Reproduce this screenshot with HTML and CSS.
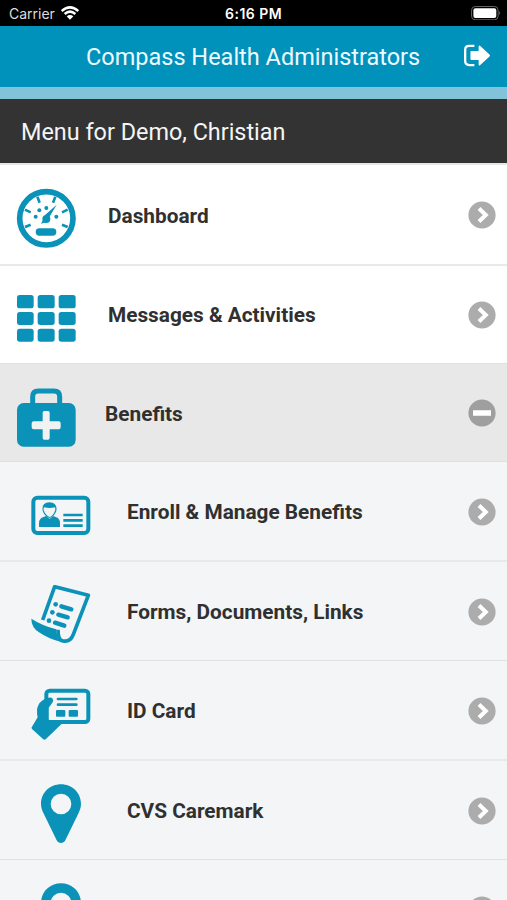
FILE: index.html
```html
<!DOCTYPE html>
<html lang="en">
<head>
<meta charset="utf-8">
<title>Compass Health Administrators</title>
<link rel="stylesheet" href="styles.css">
</head>
<body>
<svg width="0" height="0" class="defs" aria-hidden="true">
  <symbol id="go" viewBox="0 0 28 28"><circle cx="14" cy="14" r="13.6" fill="#acacac"/><path d="M11 7.5l6.8 6.5-6.8 6.5" fill="none" stroke="#fff" stroke-width="4"/></symbol>
  <symbol id="pin" viewBox="63 40 180 180"><path fill-rule="evenodd" d="M153 41c-33 0-60 25-60 59 0 11 4 20 9 31l38 78c6 11 20 11 26 0l38-78c5-11 9-20 9-31 0-34-27-59-60-59zm0 28a31 31 0 1 1 0 62 31 31 0 0 1 0-62z"/></symbol>
</svg>
<div class="status">
  <div class="carrier"><span>Carrier</span>
    <svg class="wifi" viewBox="0 0 54 42"><path d="M2 15Q27-7 52 15M11 24Q27 10 43 24" fill="none" stroke="#fff" stroke-width="7.5"/><path d="M17 31q10-8 20 0L27 41z" fill="#fff"/></svg>
  </div>
  <div class="time">6:16 PM</div>
  <svg class="battery" viewBox="0 0 90 44"><rect x="1.5" y="1.5" width="80" height="40" rx="11" fill="none" stroke="#66666a" stroke-width="3"/><rect x="7" y="7" width="69" height="29" rx="6" fill="#fff"/><path d="M85 15q6 6 0 13z" fill="#66666a"/></svg>
</div>
<header class="header">
  <h1>Compass Health Administrators</h1>
  <svg class="logout" viewBox="630 132 82 70"><path d="M663 138h-16q-12 0-12 12v34q0 12 12 12h16" fill="none" stroke="#fff" stroke-width="7"/><path d="M654 153h22v-13q0-6 5-2l28 26q3 3 0 6l-28 26q-5 4-5-2v-13h-22q-3 0-3-3v-22q0-3 3-3z" fill="#fff"/></svg>
</header>
<div class="strip"></div>
<div class="user">Menu for Demo, Christian</div>
<nav>
  <a class="row thick">
    <svg class="icon" viewBox="48 54 180 180"><circle cx="139" cy="145" r="80" fill="none" stroke="#0b92b8" stroke-width="17"/><path d="M112 80l7 18M166 80l-7 18M75 119l17 8M203 119l-17 8M75 171l17-7M203 171l-17-7" stroke="#0b92b8" stroke-width="8"/><circle cx="107" cy="140" r="6"/><circle cx="118" cy="121" r="6"/><circle cx="139" cy="114" r="6"/><circle cx="169" cy="140" r="6"/><path d="M170 104l-34 30-3 12 10 5 7-13z"/><circle cx="139" cy="147" r="12"/><path d="M123 161l7-13 10 8z"/><rect x="107" y="175" width="62" height="22" rx="11"/></svg>
    <span class="label">Dashboard</span><svg class="mark"><use href="#go"/></svg>
  </a>
  <a class="row second">
    <svg class="icon" viewBox="48 57 180 180"><rect x="51" y="75" width="50" height="40" rx="8"/><rect x="113" y="75" width="51" height="40" rx="8"/><rect x="176" y="75" width="51" height="40" rx="8"/><rect x="51" y="126" width="50" height="39" rx="8"/><rect x="113" y="126" width="51" height="39" rx="8"/><rect x="176" y="126" width="51" height="39" rx="8"/><rect x="51" y="176" width="50" height="39" rx="8"/><rect x="113" y="176" width="51" height="39" rx="8"/><rect x="176" y="176" width="51" height="39" rx="8"/></svg>
    <span class="label">Messages &amp; Activities</span><svg class="mark"><use href="#go"/></svg>
  </a>
  <a class="row open">
    <svg class="icon" viewBox="48 51 180 180"><path d="M98 104V80q0-17 17-17h47q17 0 17 17v24" fill="none" stroke="#0b92b8" stroke-width="15"/><rect x="51" y="99" width="176" height="131" rx="20"/><path d="M133 123h11q5 0 5 5v26h27q6 0 6 6v12q0 6-6 6h-27v26q0 5-5 5h-11q-5 0-5-5v-26h-27q-6 0-6-6v-12q0-6 6-6h27v-26q0-5 5-5z" fill="#f1f3f3"/></svg>
    <span class="label">Benefits</span>
    <svg class="mark" viewBox="0 0 28 28"><circle cx="14" cy="14" r="13.6" fill="#9f9f9f"/><path d="M5 14h18" stroke="#fff" stroke-width="5.5"/></svg>
  </a>
  <a class="row sub thick">
    <svg class="icon" viewBox="63 45 180 180"><rect x="70" y="83" width="165" height="106" rx="12" fill="none" stroke="#0b92b8" stroke-width="12"/><path d="M87 171v-12q0-14 14-18l7-3 11 8 11-8 7 3q13 4 13 18v12z"/><path d="M98 122q-4-24 20-25 25 1 21 25-5 17-20 22-16-5-21-22z"/><path d="M101 121q-1-4 1-9 17 4 33 0 2 5 0 10-5 15-16 19-12-4-18-20z" fill="#f2f4f5"/><path d="M160 135h58M160 151h58M160 167h58" stroke="#0b92b8" stroke-width="8"/></svg>
    <span class="label">Enroll &amp; Manage Benefits</span><svg class="mark"><use href="#go"/></svg>
  </a>
  <a class="row sub">
    <svg class="icon" viewBox="63 45 180 180"><path d="M98 150L134 50l101 26-45 117q-9 24-31 20-15-3-15-34" fill="none" stroke="#0b92b8" stroke-width="11" stroke-linejoin="round"/><path d="M64 146q33 21 75 32 1 25 12 37-33-7-64-28-23-15-23-41z"/><circle cx="137" cy="103" r="7"/><circle cx="127" cy="127" r="7"/><circle cx="117" cy="152" r="7"/><path d="M154 109l30 9M145 134l28 8M135 158l28 9" stroke="#0b92b8" stroke-width="13" stroke-linecap="round"/></svg>
    <span class="label">Forms, Documents, Links</span><svg class="mark"><use href="#go"/></svg>
  </a>
  <a class="row sub thick">
    <svg class="icon" viewBox="63 42 180 180"><rect x="109" y="62" width="126" height="94" rx="10" fill="none" stroke="#0b92b8" stroke-width="12"/><path d="M113 84q10-4 15 2 4 6-2 14l-10 13v38l6 6h38l-53 51q-4 3-8-1l-33-30q-3-4 0-7l17-28q-5-23 2-36 3-8 13-15 8-6 15-7z"/><path d="M144 87h55M144 104h55" stroke="#0b92b8" stroke-width="8" stroke-linecap="round"/><rect x="138" y="120" width="28" height="20" rx="3"/><rect x="176" y="120" width="28" height="20" rx="3"/></svg>
    <span class="label">ID Card</span><svg class="mark"><use href="#go"/></svg>
  </a>
  <a class="row sub">
    <svg class="icon"><use href="#pin"/></svg>
    <span class="label">CVS Caremark</span><svg class="mark"><use href="#go"/></svg>
  </a>
  <a class="row sub cut">
    <svg class="icon"><use href="#pin"/></svg>
    <span class="label"></span><svg class="mark"><use href="#go"/></svg>
  </a>
</nav>
</body>
</html>
```
FILE: styles.css
```css
* { box-sizing: border-box; }
body {
  margin: 0;
  height: 900px;
  overflow: hidden;
  background: #f3f5f6;
  font-family: Roboto, "Liberation Sans", sans-serif;
  color: #303030;
}
.defs { position: absolute; }
.status {
  height: 26px;
  padding: 2px 6px 0 9px;
  background: #000;
  color: #fff;
  display: grid;
  grid-template-columns: 216px auto 1fr;
  align-items: center;
  font: 14px/24px Inter, sans-serif;
}
.carrier { display: flex; align-items: center; gap: 6px; color: #ddd; }
.wifi { width: 18px; height: 14px; margin-top: -2px; }
.time { font-weight: 600; letter-spacing: 0.5px; }
.battery { width: 30px; height: 14.6px; justify-self: end; margin-top: -2px; }
.header {
  height: 61px;
  background: #0092bb;
  display: flex;
  align-items: center;
  justify-content: center;
  padding: 0 16px 0 86px;
}
h1 {
  margin: 0;
  flex: 1;
  font-size: 23.5px;
  font-weight: 400;
  line-height: 62px;
  color: #effaff;
  white-space: nowrap;
}
.logout { width: 28px; height: 23px; margin-top: -2px; }
.strip { height: 12px; background: #83c3da; }
.user {
  height: 66px;
  padding-left: 21px;
  background: #333;
  border-bottom: 2px solid #e6e6e6;
  color: #f5f5f5;
  font-size: 23.4px;
  line-height: 66px;
}
.row {
  display: flex;
  height: 99px;
  padding: 0 11px 0 16px;
  background: #fff;
  border-bottom: 1px solid #dfe0e1;
}
.row.thick { border-bottom: 2px solid #e8e9ea; height: 100px; }
.row.thick:first-child { height: 101px; }
.row.second, .row.open { height: 98px; }
.row.open { background: #e8e8e8; }
.row.sub { background: #f3f5f6; padding-left: 31px; }
.row.cut { height: 40px; overflow: hidden; border-bottom: 0; }
.icon {
  flex: none;
  width: 60px;
  height: 60px;
  margin-top: 23px;
  fill: #0b92b8;
}
.label {
  flex: 1;
  padding-left: 32px;
  font-size: 20.8px;
  font-weight: 700;
  line-height: 101px;
  white-space: nowrap;
}
.row:first-child .label { line-height: 103px; }
.second .label { line-height: 99px; }
.open .label { padding-left: 29px; }
.sub .label { padding-left: 36px; }
.mark { flex: none; width: 28px; height: 28px; margin-top: 35.5px; }
.row:first-child .mark { margin-top: 36px; }
.second .mark { margin-top: 34.5px; }
.open .mark { margin-top: 35px; }
.cut .icon, .cut .mark { margin-bottom: -60px; }
```
